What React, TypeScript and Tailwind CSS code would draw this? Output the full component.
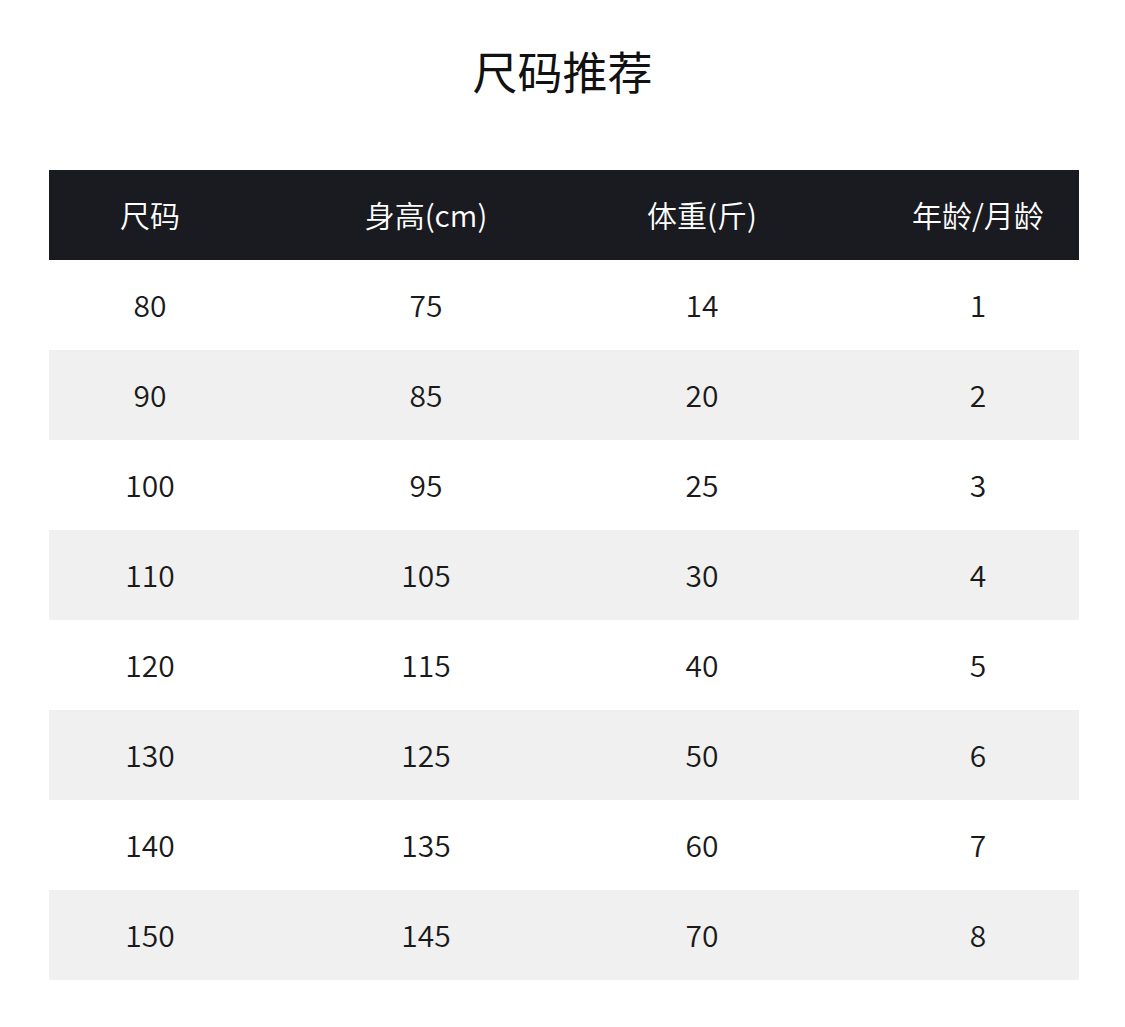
const headers = ["尺码", "身高(cm)", "体重(斤)", "年龄/月龄"];

const rows = [
  ["80", "75", "14", "1"],
  ["90", "85", "20", "2"],
  ["100", "95", "25", "3"],
  ["110", "105", "30", "4"],
  ["120", "115", "40", "5"],
  ["130", "125", "50", "6"],
  ["140", "135", "60", "7"],
  ["150", "145", "70", "8"],
];

export default function App() {
  return (
    <div
      className="min-h-screen w-full bg-white pb-[47px]"
      style={{ fontFamily: '"Noto Sans CJK SC", "Noto Sans", sans-serif' }}
    >
      {/* Title */}
      <h1 className="flex h-[145px] items-center justify-center pb-[4px] text-[45px] font-normal leading-none text-[#111]">
        尺码推荐
      </h1>

      <div className="mx-[49px] mt-[25px] w-[1030px]">
        {/* Header */}
        <div className="h-[90px] bg-[#1a1a21]">
          <div className="mx-[-37px] grid h-full grid-cols-4 items-center pb-[3px]">
            {headers.map((h) => (
              <div key={h} className="text-center text-[30px] font-[350] leading-none text-white">
                {h}
              </div>
            ))}
          </div>
        </div>

        {rows.map((r, i) => (
          <div
            key={r[0]}
            className={i % 2 === 1 ? "h-[90px] bg-[#f0f0f0]" : "h-[90px] bg-white"}
          >
            <div className="mx-[-37px] grid h-full grid-cols-4 items-center pb-[3px]">
              {r.map((c, j) => (
                <div key={j} className="text-center text-[30px] font-[350] leading-none text-[#1a1a1a]">
                  {c}
                </div>
              ))}
            </div>
          </div>
        ))}
      </div>
    </div>
  );
}
